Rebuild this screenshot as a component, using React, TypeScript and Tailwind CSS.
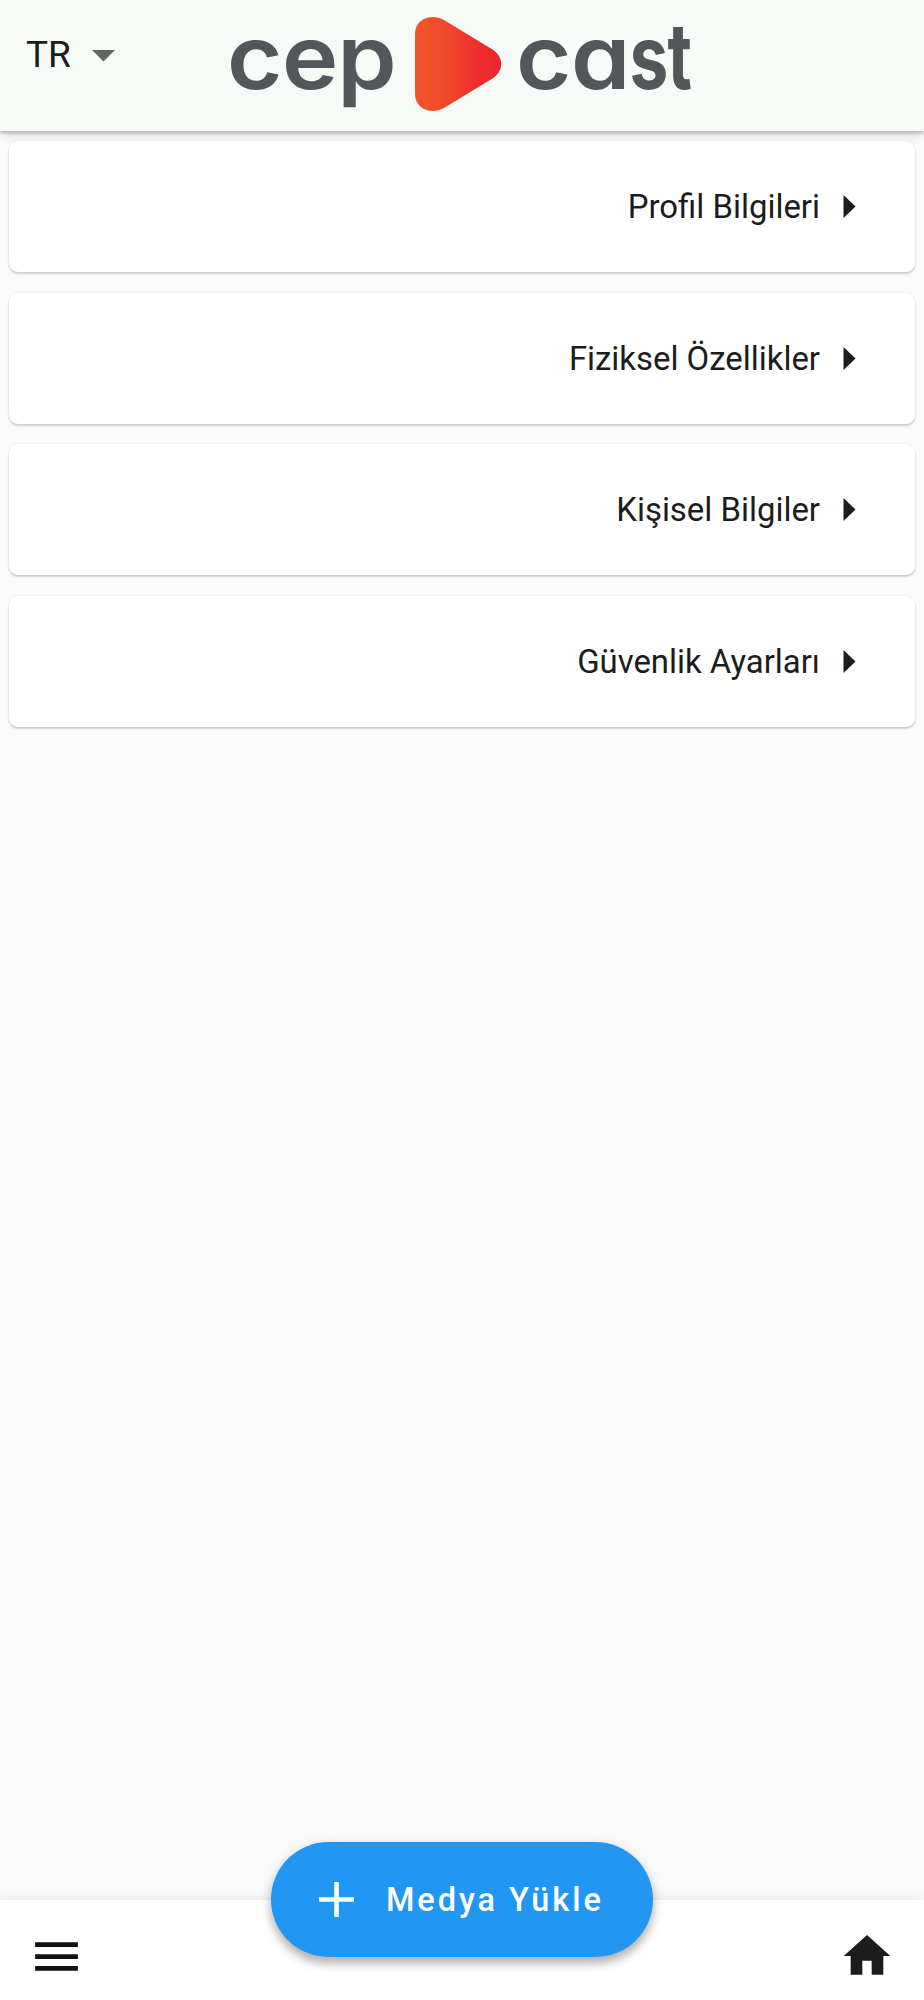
import React from "react";
import { MdHome, MdMenu } from "react-icons/md";

const sections = [
  "Profil Bilgileri",
  "Fiziksel Özellikler",
  "Kişisel Bilgiler",
  "Güvenlik Ayarları",
];

function Logo() {
  return (
    <svg width="480" height="130" viewBox="228 0 480 130" className="block">
      <defs>
        <linearGradient id="play" x1="0" x2="1" y1="0" y2="0">
          <stop offset="0" stopColor="#f1562c" />
          <stop offset="0.35" stopColor="#f24a2c" />
          <stop offset="0.75" stopColor="#ee2c2e" />
          <stop offset="1" stopColor="#ec2430" />
        </linearGradient>
      </defs>
      <g
        fill="#545759"
        fontSize="89"
        className="font-['Inter',sans-serif] font-semibold [font-feature-settings:'cv11','ss03']"
      >
        <text transform="translate(227 89) scale(1.07 1)" x="0 51.5 103" y="0">cep</text>
        <text transform="translate(516 89) scale(1.07 1)" x="0 51.5" y="0">ca</text>
        <text transform="translate(629.5 89) scale(0.78 1)" className="font-bold">s</text>
        <text transform="translate(667.5 89) scale(0.75 1.03)" className="font-bold">t</text>
      </g>
      <path
        d="M415 34C415 19 431 13 444 20L490 48C505 56 505 72 490 80L444 108C431 115 415 109 415 94Z"
        fill="url(#play)"
      />
    </svg>
  );
}

function SectionCard({ title }: { title: string }) {
  return (
    <button className="flex h-[131px] w-full items-center justify-end rounded-[9px] bg-white pr-[59px] shadow-[0_2px_2px_rgba(0,0,0,0.16),0_0_3px_rgba(0,0,0,0.08)]">
      <span className="pt-[2px] text-[32.9px] leading-none text-[#1c1c1c]">{title}</span>
      <svg width="13" height="23" viewBox="0 0 13 23" className="ml-[23px]">
        <path d="M0.5 0v23L12.5 11.5z" fill="#1c1c1c" />
      </svg>
    </button>
  );
}

export default function App() {
  return (
    <div className="flex h-[2000px] w-full flex-col bg-[#fafafa] font-['Roboto',sans-serif]">
      <header className="relative z-10 flex h-[131px] shrink-0 bg-[#f8faf7] shadow-[0_2px_3px_rgba(0,0,0,0.2),0_4px_10px_rgba(0,0,0,0.14)]">
        <button className="flex h-[110px] w-[228px] items-center pl-[26px] text-[37px] text-[#1c1c1c]">
          TR
          <svg width="23" height="12" viewBox="0 0 23 12" className="mt-[2px] ml-[21px]">
            <path d="M0 0h23L11.5 11.5z" fill="#626562" />
          </svg>
        </button>
        <Logo />
      </header>

      <main className="flex grow flex-col gap-[20.7px] px-[9px] pt-[10px]">
        {sections.map((title) => (
          <SectionCard key={title} title={title} />
        ))}
      </main>

      <footer className="relative flex h-[100px] shrink-0 items-start justify-between bg-white pt-7 pr-[29px] pl-7 text-[#1c1c1c] shadow-[0_-2px_12px_rgba(0,0,0,0.07)]">
        <MdMenu size={57} color="#111111" />
        <MdHome size={56} />
        <button className="absolute top-[-58px] left-[271px] flex h-[115px] w-[382px] items-center rounded-full bg-[#2196f3] pl-[48px] text-white shadow-[0_7px_10px_rgba(0,0,0,0.25),0_2px_14px_rgba(0,0,0,0.1)]">
          <svg width="35" height="35" viewBox="0 0 35 35">
            <path d="M17.5 0v35M0 17.5h35" stroke="currentColor" strokeWidth="4.6" />
          </svg>
          <span className="ml-[32px] pt-[2px] text-[32.5px] leading-none font-medium tracking-[2.95px]">Medya Yükle</span>
        </button>
      </footer>
    </div>
  );
}
